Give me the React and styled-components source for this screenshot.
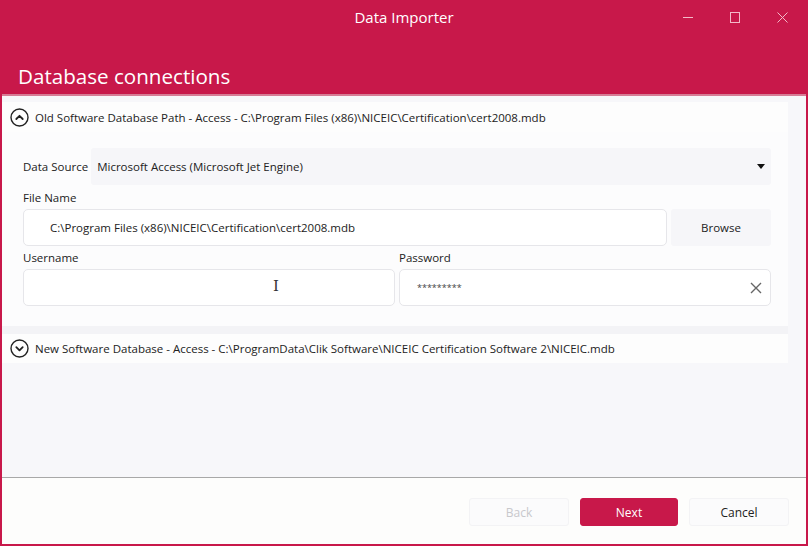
import React from 'react';
import styled, { createGlobalStyle } from 'styled-components';

const crimson = '#c8184a';

const GlobalStyle = createGlobalStyle`
  html, body { margin: 0; padding: 0; background: #fff; }
  body { font-family: "Open Sans", "Noto Sans", sans-serif; }
  * { box-sizing: border-box; }
`;

const Window = styled.div`
  width: 808px;
  height: 546px;
  display: flex;
  flex-direction: column;
  background: ${crimson};
  border: 2px solid ${crimson};
  border-top: none;
  overflow: hidden;
`;

const TitleBar = styled.div`
  height: 34px;
  display: flex;
  align-items: center;
  justify-content: center;
  position: relative;
  color: #fff;
  font-family: "Open Sans", sans-serif;
  font-size: 15px;
`;

const Controls = styled.div`
  position: absolute;
  right: 0;
  top: 0;
  height: 34px;
  display: flex;
`;

const ControlBtn = styled.div`
  width: 47px;
  height: 34px;
  display: flex;
  align-items: center;
  justify-content: center;
`;

const Header = styled.div`
  height: 62px;
  display: flex;
  align-items: flex-end;
  padding: 0 0 4px 16px;
  color: #fff;
  font-family: "Open Sans", sans-serif;
  font-size: 20.6px;
  border-bottom: 2px solid #d77c95;
`;

const Body = styled.div`
  flex: 1;
  background: #f7f7fa;
  display: flex;
  flex-direction: column;
  padding: 6px 18px 0 0;
`;

const ExpanderHead = styled.div`
  height: ${p => p.$h || 30}px;
  display: flex;
  align-items: center;
  gap: 6px;
  padding-left: 8px;
  background: #fdfdfd;
  color: #222;
  font-size: 11.5px;
`;

const Panel = styled.div`
  background: #fcfcfd;
  padding: 16px 17px 20px 21px;
  display: flex;
  flex-direction: column;
`;

const Gap = styled.div`
  height: ${p => p.$h}px;
  background: #f3f3f6;
`;

const Row = styled.div`
  display: flex;
  align-items: ${p => p.$align || 'center'};
  gap: ${p => p.$gap || 4}px;
  margin-top: ${p => p.$mt || 0}px;
`;

const Label = styled.div`
  font-size: 11.5px;
  color: #222;
  margin: ${p => p.$m || '0'};
`;

const Select = styled.div`
  flex: 1;
  height: 37px;
  background: #f6f6f9;
  border-radius: 3px;
  display: flex;
  align-items: center;
  justify-content: space-between;
  padding: 0 6px 0 6px;
  font-size: 11.5px;
  color: #222;
`;

const Input = styled.div`
  flex: ${p => p.$flex || 'none'};
  height: 37px;
  background: #fff;
  border: 1px solid #e6e6ea;
  border-radius: 5px;
  display: flex;
  align-items: center;
  justify-content: space-between;
  padding: 0 8px 0 ${p => p.$pl || 8}px;
  font-size: 11.5px;
  color: #222;
  position: relative;
`;

const Col = styled.div`
  flex: 1;
  display: flex;
  flex-direction: column;
`;

const SideButton = styled.div`
  width: 100px;
  height: 37px;
  background: #f6f6f9;
  border-radius: 3px;
  display: flex;
  align-items: center;
  justify-content: center;
  font-size: 11.5px;
  color: #222;
`;

const Cursor = styled.div`
  position: absolute;
  left: 249px;
  top: 9px;
  font-family: "DejaVu Serif", serif;
  font-size: 15px;
  color: #333;
  line-height: 1;
`;

const Stars = styled.span`
  font-size: 9px;
  letter-spacing: 0;
  color: #444;
`;

const Footer = styled.div`
  height: 67px;
  background: #fdfdfc;
  border-top: 1px solid #a8a8a8;
  display: flex;
  justify-content: flex-end;
  align-items: flex-start;
  padding: 20px 17px 0 0;
  gap: 11px;
`;

const Button = styled.div`
  width: ${p => p.$w || 100}px;
  height: 28px;
  border-radius: 3px;
  display: flex;
  align-items: center;
  justify-content: center;
  font-size: 12px;
  background: ${p => (p.$primary ? crimson : '#fbfbfc')};
  color: ${p => (p.$primary ? '#fff' : p.$disabled ? '#c8c8cc' : '#222')};
  border: 1px solid ${p => (p.$primary ? crimson : '#f3f3f5')};
`;

const ChevronCircle = ({ up }) => (
  <svg width="19" height="19" viewBox="0 0 19 19">
    <circle cx="9.5" cy="9.5" r="8.5" fill="none" stroke="#222" strokeWidth="1.4" />
    <path
      d={up ? 'M6.3 11 L9.5 7.8 L12.7 11' : 'M6.3 8.2 L9.5 11.4 L12.7 8.2'}
      fill="none"
      stroke="#222"
      strokeWidth="1.8"
      strokeLinecap="round"
      strokeLinejoin="round"
    />
  </svg>
);

export default function App() {
  return (
    <Window>
      <GlobalStyle />
      <TitleBar>
        Data Importer
        <Controls>
          <ControlBtn>
            <svg width="11" height="11" viewBox="0 0 11 11"><path d="M0 5.5 H10" stroke="#f3b9c8" strokeWidth="1" /></svg>
          </ControlBtn>
          <ControlBtn>
            <svg width="11" height="11" viewBox="0 0 11 11"><rect x="0.5" y="0.5" width="9" height="10" fill="none" stroke="#f3b9c8" strokeWidth="1" /></svg>
          </ControlBtn>
          <ControlBtn>
            <svg width="11" height="11" viewBox="0 0 11 11"><path d="M0.5 0.5 L10.5 10.5 M10.5 0.5 L0.5 10.5" stroke="#f3b9c8" strokeWidth="1" /></svg>
          </ControlBtn>
        </Controls>
      </TitleBar>
      <Header>Database connections</Header>
      <Body>
        <ExpanderHead $h={30}>
          <ChevronCircle up />
          Old Software Database Path - Access - C:\Program Files (x86)\NICEIC\Certification\cert2008.mdb
        </ExpanderHead>
        <Panel>
          <Row $gap={3}>
            <Label>Data Source</Label>
            <Select>
              Microsoft Access (Microsoft Jet Engine)
              <svg width="8" height="5" viewBox="0 0 8 5"><path d="M0 0 H8 L4 5 Z" fill="#111" /></svg>
            </Select>
          </Row>
          <Label $m="5px 0 4px">File Name</Label>
          <Row $gap={4}>
            <Input $flex={1} $pl={26}>C:\Program Files (x86)\NICEIC\Certification\cert2008.mdb</Input>
            <SideButton>Browse</SideButton>
          </Row>
          <Row $gap={4} $mt={4} $align="stretch">
            <Col>
              <Label $m="0 0 4px">Username</Label>
              <Input>
                <Cursor>I</Cursor>
              </Input>
            </Col>
            <Col>
              <Label $m="0 0 4px">Password</Label>
              <Input $pl={17}>
                <Stars>*********</Stars>
                <svg width="12" height="12" viewBox="0 0 12 12"><path d="M1 1 L11 11 M11 1 L1 11" stroke="#666" strokeWidth="1.4" /></svg>
              </Input>
            </Col>
          </Row>
        </Panel>
        <Gap $h={8} />
        <ExpanderHead $h={29}>
          <ChevronCircle />
          New Software Database - Access - C:\ProgramData\Clik Software\NICEIC Certification Software 2\NICEIC.mdb
        </ExpanderHead>
      </Body>
      <Footer>
        <Button $disabled>Back</Button>
        <Button $primary $w={98}>Next</Button>
        <Button>Cancel</Button>
      </Footer>
    </Window>
  );
}
